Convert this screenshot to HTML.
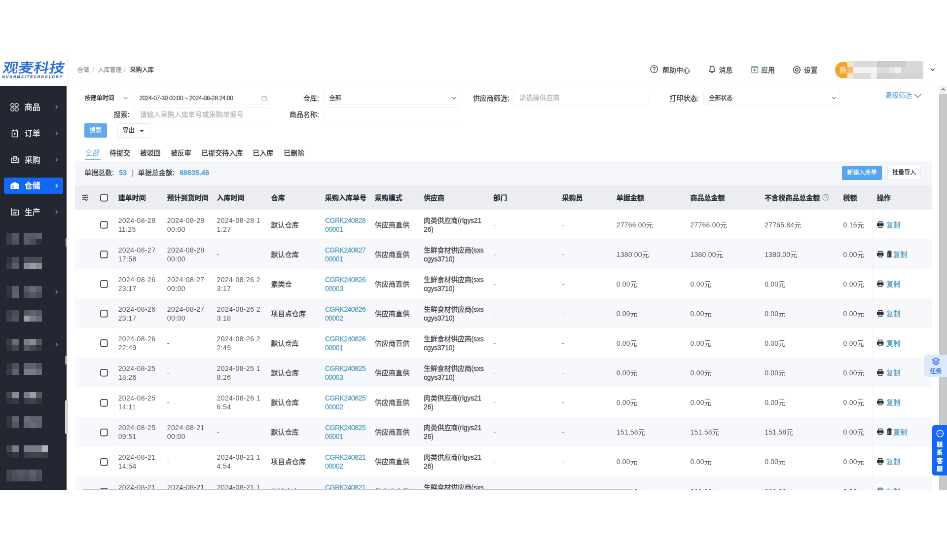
<!DOCTYPE html>
<html lang="zh-CN"><head><meta charset="utf-8"><title>采购入库</title><style>
*{box-sizing:border-box;margin:0;padding:0}
html,body{width:947px;height:547px;overflow:hidden;background:#fff}
body{font-family:"Liberation Sans","Noto Sans CJK SC",sans-serif;color:#44474e;-webkit-text-stroke:0.3px}
#app{position:absolute;left:0;top:0;width:1920px;height:1109px;transform:scale(0.493229);transform-origin:0 0;overflow:hidden;background:#fff;font-size:14px;will-change:transform;opacity:0.9999;filter:blur(0.55px)}
.abs{position:absolute;white-space:nowrap}
.t{position:absolute;white-space:nowrap;line-height:20px;height:20px;margin-top:-10px}
.t12{font-size:12px}
.t14{font-size:14px}
.t16{font-size:16px}
.hd{color:#2c3038;font-weight:bold}
.lnk{color:#559ebd}
.lab{color:#3a3e46;text-align:right}
.ph{color:#b4b8c0}
.inp{position:absolute;border:1px solid #eef0f4;border-radius:3px;background:#fff}
.row{position:absolute;left:151.65px;width:1737.93px;height:60.13px}
.row.odd{background:#fff}
.row.even{background:#f7f8fb}
.c{position:absolute;white-space:nowrap;line-height:17.8px;font-size:14px;top:50%;transform:translateY(-50%);margin-top:1.9px;letter-spacing:0.15px}
.n{color:#575a61;-webkit-text-stroke:0;letter-spacing:0.42px}
.cb{position:absolute;width:15.5px;height:15.5px;border:1.6px solid #3c4048;border-radius:3.5px;background:#fff}
.side{position:absolute;left:0;background:#242731}
.sit{position:absolute;color:#f2f3f5;font-size:16px;line-height:22px;height:22px;margin-top:-11px;white-space:nowrap}
svg{position:absolute;overflow:visible}
</style></head><body><div id="app">
<div class="abs" style="left:0;top:111.51px;width:1920px;height:61.43px;background:#fff;border-bottom:1px solid #eceef2"></div>
<div class="abs" style="left:135.84px;top:111.51px;width:1px;height:61.43px;background:#f0f1f4"></div>
<div class="abs" id="logo" style="left:5.88px;top:123.47px;font-size:27px;line-height:30px;font-weight:500;color:#2b6dd4;transform-origin:0 50%;transform:scaleX(1.16) skewX(-9deg);letter-spacing:0px">观麦科技</div>
<div class="abs" id="logosub" style="left:4.46px;top:152.36px;font-size:6.8px;line-height:8px;font-weight:bold;font-style:italic;color:#3560b4;letter-spacing:2.56px">GUANMAITECHNOLOGY</div>
<div class="t t12" style="left:156.52px;top:142.33px;color:#8c9098">仓储</div>
<div class="t t12" style="left:186.93px;top:142.33px;color:#c0c4cc">/</div>
<div class="t t12" style="left:198.69px;top:142.33px;color:#8c9098">入库管理</div>
<div class="t t12" style="left:251.20px;top:142.33px;color:#c0c4cc">/</div>
<div class="t t12" style="left:263.77px;top:142.33px;color:#2c3038">采购入库</div>
<div class="t t14" style="left:1342.99px;top:141.72px;color:#3a3e46">帮助中心</div>
<div class="t t14" style="left:1457.54px;top:141.72px;color:#3a3e46">消息</div>
<div class="t t14" style="left:1543.10px;top:141.72px;color:#3a3e46">应用</div>
<div class="t t14" style="left:1629.87px;top:141.72px;color:#3a3e46">设置</div>
<svg style="left:1318.05px;top:131.99px" width="16.42px" height="16.42px" viewBox="0 0 16 16"><circle cx="8" cy="8" r="7.2" fill="none" stroke="#3a3e46" stroke-width="1.3"/><path d="M5.8 6.3a2.2 2.2 0 1 1 3.2 2c-.7.4-1 .8-1 1.6" fill="none" stroke="#3a3e46" stroke-width="1.3" stroke-linecap="round"/><circle cx="8" cy="11.9" r=".85" fill="#3a3e46"/></svg>
<svg style="left:1437.06px;top:132.19px" width="13.38px" height="17.03px" viewBox="0 0 14 17"><path d="M7 1.400C4.200 1.400 2.700 3.500 2.700 6.300V10.200L1.300 12.900H12.700L11.300 10.200V6.300C11.300 3.500 9.800 1.400 7 1.400Z" fill="none" stroke="#2e323a" stroke-width="1.700" stroke-linejoin="round"/><path d="M5.200 15.300H8.800" stroke="#2e323a" stroke-width="1.700" stroke-linecap="round"/></svg>
<svg style="left:1522.62px;top:133.20px" width="14.19px" height="15.41px" viewBox="0 0 14 15"><rect x="0.8" y="1.6" width="12.4" height="12.6" rx="1.6" fill="#fff" stroke="#5aa99c" stroke-width="1.5"/><path d="M0.8 3.4h12.400" stroke="#5aa99c" stroke-width="1.500"/><path d="M7 5.8v4.600M4.800 8.500L7 10.700l2.200-2.200" fill="none" stroke="#e2504c" stroke-width="1.400" stroke-linecap="round" stroke-linejoin="round"/></svg>
<svg style="left:1607.16px;top:133.00px" width="17.03px" height="17.03px" viewBox="0 0 16 16"><path d="M6.87 1.62Q8.00 0.70 9.13 1.62Q10.26 2.55 11.71 2.69Q13.16 2.84 13.31 4.29Q13.45 5.74 14.38 6.87Q15.30 8.00 14.38 9.13Q13.45 10.26 13.31 11.71Q13.16 13.16 11.71 13.31Q10.26 13.45 9.13 14.38Q8.00 15.30 6.87 14.38Q5.74 13.45 4.29 13.31Q2.84 13.16 2.69 11.71Q2.55 10.26 1.62 9.13Q0.70 8.00 1.62 6.87Q2.55 5.74 2.69 4.29Q2.84 2.84 4.29 2.69Q5.74 2.55 6.87 1.62Z" fill="none" stroke="#2e323a" stroke-width="1.400" stroke-linejoin="round"/><circle cx="8" cy="8" r="2.600" fill="none" stroke="#2e323a" stroke-width="1.400"/></svg>
<div class="abs" style="left:1692.93px;top:125.30px;width:34.06px;height:34.06px;border-radius:50%;background:#f0a32e;color:#fff;font-size:14px;line-height:34.06px;text-align:center;overflow:hidden"><span style="position:relative;left:-1px;opacity:.75">扬</span></div>
<div class="abs" style="left:1718.07px;top:124.28px;width:12.06px;height:11.86px;background:#f6e3c4"></div>
<div class="abs" style="left:1730.03px;top:124.28px;width:48.15px;height:11.86px;background:#dadadb"></div>
<div class="abs" style="left:1778.08px;top:124.28px;width:58.90px;height:11.86px;background:#cbcbcc"></div>
<div class="abs" style="left:1836.87px;top:124.28px;width:35.58px;height:11.86px;background:#d9d9da"></div>
<div class="abs" style="left:1718.07px;top:136.04px;width:12.06px;height:11.86px;background:#f4bb62"></div>
<div class="abs" style="left:1730.03px;top:136.04px;width:48.15px;height:11.86px;background:#f3f3f4"></div>
<div class="abs" style="left:1778.08px;top:136.04px;width:24.43px;height:11.86px;background:#dcdcdd"></div>
<div class="abs" style="left:1802.41px;top:136.04px;width:12.27px;height:11.86px;background:#e6e6e7"></div>
<div class="abs" style="left:1814.57px;top:136.04px;width:12.27px;height:11.86px;background:#f1f1f2"></div>
<div class="abs" style="left:1826.74px;top:136.04px;width:45.72px;height:11.86px;background:#d8d8d9"></div>
<div class="abs" style="left:1718.07px;top:147.80px;width:12.06px;height:11.86px;background:#f7e6cb"></div>
<div class="abs" style="left:1730.03px;top:147.80px;width:34.97px;height:11.86px;background:#dcdcdd"></div>
<div class="abs" style="left:1764.90px;top:147.80px;width:13.28px;height:11.86px;background:#f0f0f1"></div>
<div class="abs" style="left:1778.08px;top:147.80px;width:36.60px;height:11.86px;background:#d0d0d1"></div>
<div class="abs" style="left:1814.57px;top:147.80px;width:57.88px;height:11.86px;background:#d5d5d6"></div>
<svg style="left:1885.94px;top:138.27px" width="9.73px" height="5.88px" viewBox="0 0 10 6"><path d="M1 1l4 4 4-4" fill="none" stroke="#3a3e46" stroke-width="1.500"/></svg>
<div class="side" style="top:173.55px;width:135.23px;height:820.71px"></div>
<div class="abs" style="left:8.11px;top:359.87px;width:119.62px;height:33.45px;background:#1268f3;border-radius:4px"></div>
<div class="sit" style="left:49.67px;top:218.26px;">商品</div>
<svg style="left:111.51px;top:212.48px" width="5.47px" height="9.73px" viewBox="0 0 6 10"><path d="M1 1l4 4-4 4" fill="none" stroke="#8a8e9a" stroke-width="1.700"/></svg>
<div class="sit" style="left:49.67px;top:271.37px;">订单</div>
<svg style="left:111.51px;top:265.60px" width="5.47px" height="9.73px" viewBox="0 0 6 10"><path d="M1 1l4 4-4 4" fill="none" stroke="#8a8e9a" stroke-width="1.700"/></svg>
<div class="sit" style="left:49.67px;top:324.70px;">采购</div>
<svg style="left:111.51px;top:318.92px" width="5.47px" height="9.73px" viewBox="0 0 6 10"><path d="M1 1l4 4-4 4" fill="none" stroke="#8a8e9a" stroke-width="1.700"/></svg>
<div class="sit" style="left:49.67px;top:377.41px;font-weight:bold;">仓储</div>
<svg style="left:111.51px;top:371.63px" width="5.47px" height="9.73px" viewBox="0 0 6 10"><path d="M1 1l4 4-4 4" fill="none" stroke="#ffffff" stroke-width="1.700"/></svg>
<div class="sit" style="left:49.67px;top:430.73px;">生产</div>
<svg style="left:111.51px;top:424.95px" width="5.47px" height="9.73px" viewBox="0 0 6 10"><path d="M1 1l4 4-4 4" fill="none" stroke="#8a8e9a" stroke-width="1.700"/></svg>
<svg style="left:21.49px;top:208.83px" width="17.03px" height="17.03px" viewBox="0 0 17 17"><g fill="none" stroke="#eceef2" stroke-width="1.500"><rect x="1" y="1" width="6.600" height="6.600" rx="3"/><rect x="9.400" y="1" width="6.600" height="6.600" rx="3"/><rect x="1" y="9.400" width="6.600" height="6.600" rx="3"/><rect x="9.400" y="9.400" width="6.600" height="6.600" rx="3"/></g></svg>
<svg style="left:23.11px;top:261.54px" width="13.99px" height="17.03px" viewBox="0 0 14 17"><g fill="none" stroke="#eceef2" stroke-width="1.600" stroke-linejoin="round"><path d="M1.500 3h11v12.500h-11z"/><path d="M4 1v3M10 1v3" stroke-linecap="round"/></g><path d="M5.400 6.600l4.200 2.700-4.200 2.700z" fill="#eceef2"/></svg>
<svg style="left:21.80px;top:317.09px" width="16.32px" height="13.18px" viewBox="0 0 16 13"><g fill="none" stroke="#eceef2" stroke-width="1.600" stroke-linejoin="round"><path d="M1 3.600h14v8.600h-14z"/><path d="M4.800 3.600V0.900h6.400V3.600" /><path d="M4.800 5.600c0 2.400 1.400 3.400 3.200 3.400s3.200-1 3.200-3.400" stroke-linecap="round"/></g></svg>
<svg style="left:21.09px;top:369.00px" width="18.04px" height="14.19px" viewBox="0 0 18 14"><path d="M9 0.200C12 1.200 15.500 2.900 17.500 4.600V13.800H0.500V4.600C2.500 2.900 6 1.200 9 0.200z" fill="#fff"/><rect x="3.400" y="7.200" width="3.400" height="1.500" fill="#1268f3"/><rect x="3.400" y="10.200" width="3.400" height="1.500" fill="#1268f3"/></svg>
<svg style="left:21.80px;top:421.91px" width="16.32px" height="15.00px" viewBox="0 0 16 15"><g fill="none" stroke="#eceef2" stroke-width="1.600" stroke-linejoin="round"><path d="M1 4h14v10h-14z"/><path d="M1 0.800v3.200M8 1.500v2.500" stroke-linecap="round"/><path d="M4.300 8.500h7.400M6 8.500v5.500M10 8.500v5.500"/></g></svg>
<div class="abs" style="left:13.18px;top:471.79px;width:12.27px;height:12.16px;background:#3a3d47"></div>
<div class="abs" style="left:25.34px;top:471.79px;width:12.27px;height:12.16px;background:#555862"></div>
<div class="abs" style="left:48.25px;top:471.79px;width:12.27px;height:12.16px;background:#5a5d68"></div>
<div class="abs" style="left:60.42px;top:471.79px;width:12.27px;height:12.16px;background:#5a5d68"></div>
<div class="abs" style="left:72.58px;top:471.79px;width:12.27px;height:12.16px;background:#5e616b"></div>
<div class="abs" style="left:13.18px;top:483.85px;width:12.27px;height:12.16px;background:#3d404a"></div>
<div class="abs" style="left:25.34px;top:483.85px;width:12.27px;height:12.16px;background:#50535d"></div>
<div class="abs" style="left:48.25px;top:483.85px;width:12.27px;height:12.16px;background:#5a5d68"></div>
<div class="abs" style="left:60.42px;top:483.85px;width:12.27px;height:12.16px;background:#4a4d57"></div>
<div class="abs" style="left:72.58px;top:483.85px;width:12.27px;height:12.16px;background:#2f323c"></div>
<div class="abs" style="left:13.18px;top:520.85px;width:12.27px;height:12.16px;background:#30333d"></div>
<div class="abs" style="left:25.34px;top:520.85px;width:12.27px;height:12.16px;background:#4a4d57"></div>
<div class="abs" style="left:48.25px;top:520.85px;width:12.27px;height:12.16px;background:#4a4d57"></div>
<div class="abs" style="left:60.42px;top:520.85px;width:12.27px;height:12.16px;background:#4a4d57"></div>
<div class="abs" style="left:72.58px;top:520.85px;width:12.27px;height:12.16px;background:#4a4d57"></div>
<div class="abs" style="left:13.18px;top:532.92px;width:12.27px;height:12.16px;background:#3a3d47"></div>
<div class="abs" style="left:25.34px;top:532.92px;width:12.27px;height:12.16px;background:#5a5d68"></div>
<div class="abs" style="left:48.25px;top:532.92px;width:12.27px;height:12.16px;background:#8a8d97"></div>
<div class="abs" style="left:60.42px;top:532.92px;width:12.27px;height:12.16px;background:#9a9da6"></div>
<div class="abs" style="left:72.58px;top:532.92px;width:12.27px;height:12.16px;background:#8a8d97"></div>
<div class="abs" style="left:13.18px;top:579.85px;width:12.27px;height:12.16px;background:#33363f"></div>
<div class="abs" style="left:25.34px;top:579.85px;width:12.27px;height:12.16px;background:#5a5d68"></div>
<div class="abs" style="left:48.25px;top:579.85px;width:12.27px;height:12.16px;background:#555862"></div>
<div class="abs" style="left:60.42px;top:579.85px;width:12.27px;height:12.16px;background:#6a6d77"></div>
<div class="abs" style="left:72.58px;top:579.85px;width:12.27px;height:12.16px;background:#5a5d68"></div>
<div class="abs" style="left:13.18px;top:591.92px;width:12.27px;height:12.16px;background:#30333d"></div>
<div class="abs" style="left:25.34px;top:591.92px;width:12.27px;height:12.16px;background:#60636d"></div>
<div class="abs" style="left:48.25px;top:591.92px;width:12.27px;height:12.16px;background:#4a4d57"></div>
<div class="abs" style="left:60.42px;top:591.92px;width:12.27px;height:12.16px;background:#555862"></div>
<div class="abs" style="left:72.58px;top:591.92px;width:12.27px;height:12.16px;background:#4a4d57"></div>
<svg style="left:111.51px;top:586.95px" width="5.47px" height="9.73px" viewBox="0 0 6 10"><path d="M1 1l4 4-4 4" fill="none" stroke="#8a8e9a" stroke-width="1.700"/></svg>
<div class="abs" style="left:13.18px;top:627.70px;width:12.27px;height:12.16px;background:#3a3d47"></div>
<div class="abs" style="left:25.34px;top:627.70px;width:12.27px;height:12.16px;background:#4a4d57"></div>
<div class="abs" style="left:48.25px;top:627.70px;width:12.27px;height:12.16px;background:#555862"></div>
<div class="abs" style="left:60.42px;top:627.70px;width:12.27px;height:12.16px;background:#60636d"></div>
<div class="abs" style="left:72.58px;top:627.70px;width:12.27px;height:12.16px;background:#555862"></div>
<div class="abs" style="left:13.18px;top:639.76px;width:12.27px;height:12.16px;background:#40434d"></div>
<div class="abs" style="left:25.34px;top:639.76px;width:12.27px;height:12.16px;background:#50535d"></div>
<div class="abs" style="left:48.25px;top:639.76px;width:12.27px;height:12.16px;background:#9a9da6"></div>
<div class="abs" style="left:60.42px;top:639.76px;width:12.27px;height:12.16px;background:#7a7d87"></div>
<div class="abs" style="left:72.58px;top:639.76px;width:12.27px;height:12.16px;background:#6a6d77"></div>
<div class="abs" style="left:13.18px;top:686.50px;width:12.27px;height:12.16px;background:#3a3d47"></div>
<div class="abs" style="left:25.34px;top:686.50px;width:12.27px;height:12.16px;background:#6a6d77"></div>
<div class="abs" style="left:48.25px;top:686.50px;width:12.27px;height:12.16px;background:#7a7d87"></div>
<div class="abs" style="left:60.42px;top:686.50px;width:12.27px;height:12.16px;background:#8a8d97"></div>
<div class="abs" style="left:72.58px;top:686.50px;width:12.27px;height:12.16px;background:#555862"></div>
<div class="abs" style="left:13.18px;top:698.56px;width:12.27px;height:12.16px;background:#30333d"></div>
<div class="abs" style="left:25.34px;top:698.56px;width:12.27px;height:12.16px;background:#44474f"></div>
<div class="abs" style="left:48.25px;top:698.56px;width:12.27px;height:12.16px;background:#555862"></div>
<div class="abs" style="left:60.42px;top:698.56px;width:12.27px;height:12.16px;background:#44474f"></div>
<div class="abs" style="left:72.58px;top:698.56px;width:12.27px;height:12.16px;background:#33363f"></div>
<svg style="left:111.51px;top:693.59px" width="5.47px" height="9.73px" viewBox="0 0 6 10"><path d="M1 1l4 4-4 4" fill="none" stroke="#8a8e9a" stroke-width="1.700"/></svg>
<div class="abs" style="left:13.18px;top:735.97px;width:12.27px;height:12.16px;background:#33363f"></div>
<div class="abs" style="left:25.34px;top:735.97px;width:12.27px;height:12.16px;background:#50535d"></div>
<div class="abs" style="left:48.25px;top:735.97px;width:12.27px;height:12.16px;background:#60636d"></div>
<div class="abs" style="left:60.42px;top:735.97px;width:12.27px;height:12.16px;background:#60636d"></div>
<div class="abs" style="left:72.58px;top:735.97px;width:12.27px;height:12.16px;background:#50535d"></div>
<div class="abs" style="left:13.18px;top:748.03px;width:12.27px;height:12.16px;background:#3a3d47"></div>
<div class="abs" style="left:25.34px;top:748.03px;width:12.27px;height:12.16px;background:#60636d"></div>
<div class="abs" style="left:48.25px;top:748.03px;width:12.27px;height:12.16px;background:#7a7d87"></div>
<div class="abs" style="left:60.42px;top:748.03px;width:12.27px;height:12.16px;background:#7a7d87"></div>
<div class="abs" style="left:72.58px;top:748.03px;width:12.27px;height:12.16px;background:#6a6d77"></div>
<div class="abs" style="left:13.18px;top:794.76px;width:12.27px;height:12.16px;background:#44474f"></div>
<div class="abs" style="left:25.34px;top:794.76px;width:12.27px;height:12.16px;background:#8a8d97"></div>
<div class="abs" style="left:48.25px;top:794.76px;width:12.27px;height:12.16px;background:#7a7d87"></div>
<div class="abs" style="left:60.42px;top:794.76px;width:12.27px;height:12.16px;background:#9a9da6"></div>
<div class="abs" style="left:72.58px;top:794.76px;width:12.27px;height:12.16px;background:#555862"></div>
<div class="abs" style="left:13.18px;top:806.83px;width:12.27px;height:12.16px;background:#30333d"></div>
<div class="abs" style="left:25.34px;top:806.83px;width:12.27px;height:12.16px;background:#3a3d47"></div>
<div class="abs" style="left:48.25px;top:806.83px;width:12.27px;height:12.16px;background:#3a3d47"></div>
<div class="abs" style="left:60.42px;top:806.83px;width:12.27px;height:12.16px;background:#40434d"></div>
<div class="abs" style="left:72.58px;top:806.83px;width:12.27px;height:12.16px;background:#33363f"></div>
<div class="abs" style="left:13.18px;top:843.83px;width:12.27px;height:12.16px;background:#33363f"></div>
<div class="abs" style="left:25.34px;top:843.83px;width:12.27px;height:12.16px;background:#60636d"></div>
<div class="abs" style="left:48.25px;top:843.83px;width:12.27px;height:12.16px;background:#6a6d77"></div>
<div class="abs" style="left:60.42px;top:843.83px;width:12.27px;height:12.16px;background:#60636d"></div>
<div class="abs" style="left:72.58px;top:843.83px;width:12.27px;height:12.16px;background:#60636d"></div>
<div class="abs" style="left:13.18px;top:855.89px;width:12.27px;height:12.16px;background:#33363f"></div>
<div class="abs" style="left:25.34px;top:855.89px;width:12.27px;height:12.16px;background:#555862"></div>
<div class="abs" style="left:48.25px;top:855.89px;width:12.27px;height:12.16px;background:#60636d"></div>
<div class="abs" style="left:60.42px;top:855.89px;width:12.27px;height:12.16px;background:#6a6d77"></div>
<div class="abs" style="left:72.58px;top:855.89px;width:12.27px;height:12.16px;background:#60636d"></div>
<div class="abs" style="left:13.18px;top:903.43px;width:12.27px;height:12.16px;background:#44474f"></div>
<div class="abs" style="left:25.34px;top:903.43px;width:12.27px;height:12.16px;background:#7a7d87"></div>
<div class="abs" style="left:48.25px;top:903.43px;width:12.27px;height:12.16px;background:#7a7d87"></div>
<div class="abs" style="left:60.42px;top:903.43px;width:12.27px;height:12.16px;background:#7a7d87"></div>
<div class="abs" style="left:72.58px;top:903.43px;width:12.27px;height:12.16px;background:#7a7d87"></div>
<div class="abs" style="left:84.75px;top:903.43px;width:12.27px;height:12.16px;background:#b0b3bb"></div>
<div class="abs" style="left:13.18px;top:915.50px;width:12.27px;height:12.16px;background:#2a2d37"></div>
<div class="abs" style="left:25.34px;top:915.50px;width:12.27px;height:12.16px;background:#33363f"></div>
<div class="abs" style="left:48.25px;top:915.50px;width:12.27px;height:12.16px;background:#3a3d47"></div>
<div class="abs" style="left:60.42px;top:915.50px;width:12.27px;height:12.16px;background:#40434d"></div>
<div class="abs" style="left:72.58px;top:915.50px;width:12.27px;height:12.16px;background:#40434d"></div>
<div class="abs" style="left:84.75px;top:915.50px;width:12.27px;height:12.16px;background:#3a3d47"></div>
<div class="abs" style="left:13.18px;top:951.69px;width:12.27px;height:12.16px;background:#44474f"></div>
<div class="abs" style="left:25.34px;top:951.69px;width:12.27px;height:12.16px;background:#50535d"></div>
<div class="abs" style="left:37.31px;top:951.69px;width:12.27px;height:12.16px;background:#555862"></div>
<div class="abs" style="left:48.25px;top:951.69px;width:12.27px;height:12.16px;background:#50535d"></div>
<div class="abs" style="left:60.42px;top:951.69px;width:12.27px;height:12.16px;background:#60636d"></div>
<div class="abs" style="left:72.58px;top:951.69px;width:12.27px;height:12.16px;background:#50535d"></div>
<div class="abs" style="left:13.18px;top:963.75px;width:12.27px;height:12.16px;background:#40434d"></div>
<div class="abs" style="left:25.34px;top:963.75px;width:12.27px;height:12.16px;background:#4a4d57"></div>
<div class="abs" style="left:37.31px;top:963.75px;width:12.27px;height:12.16px;background:#4d505a"></div>
<div class="abs" style="left:48.25px;top:963.75px;width:12.27px;height:12.16px;background:#4a4d57"></div>
<div class="abs" style="left:60.42px;top:963.75px;width:12.27px;height:12.16px;background:#555862"></div>
<div class="abs" style="left:72.58px;top:963.75px;width:12.27px;height:12.16px;background:#4a4d57"></div>
<div class="abs" style="left:133.00px;top:482.53px;width:3.24px;height:17.23px;background:#c9cbd1;border-radius:2px;opacity:.8"></div>
<div class="abs" style="left:132.39px;top:720.76px;width:3.85px;height:18.25px;background:#c9cbd1;border-radius:2px;opacity:.8"></div>
<div class="abs" style="left:131.78px;top:810.98px;width:6.49px;height:68.93px;background:#d4d5da;border-radius:3px"></div>
<div class="inp" style="left:271.07px;top:183.89px;width:276.95px;height:29.60px"></div>
<div class="inp" style="left:655.88px;top:183.89px;width:275.33px;height:29.60px"></div>
<div class="inp" style="left:1040.90px;top:183.89px;width:275.53px;height:29.60px"></div>
<div class="inp" style="left:1425.91px;top:183.89px;width:276.34px;height:29.60px"></div>
<div class="inp" style="left:271.07px;top:216.73px;width:276.95px;height:29.60px"></div>
<div class="inp" style="left:655.88px;top:216.73px;width:275.33px;height:29.60px"></div>
<div class="t t12" id="lab1" style="left:171.73px;top:198.69px;color:#2c3038">按建单时间</div>
<svg style="left:250.39px;top:195.89px" width="9.33px" height="5.60px" viewBox="0 0 10 6"><path d="M1 1l4 4 4-4" fill="none" stroke="#6a6e78" stroke-width="1.3"/></svg>
<div class="t t12" id="date" style="left:282.42px;top:198.69px;color:#4a4e56;letter-spacing:-0.37px">2024-07-30 00:00 ~ 2024-08-28 24:00</div>
<svg style="left:529.57px;top:193.82px" width="11.35px" height="10.54px" viewBox="0 0 12 11"><g fill="none" stroke="#b4b8c0" stroke-width="1.100"><rect x="0.800" y="1.800" width="10.400" height="8.400" rx="1"/><path d="M0.800 4.500h10.400M3.500 0.500v2.500M8.500 0.500v2.500"/></g></svg>
<div class="t t14 lab" style="left:140.71px;top:231.54px;width:121.65px">搜索:</div>
<div class="t t14 lab" style="left:525.11px;top:198.69px;width:121.65px">仓库:</div>
<div class="t t14 lab" style="left:525.11px;top:231.54px;width:121.65px">商品名称:</div>
<div class="t t14 lab" style="left:911.14px;top:198.69px;width:121.65px">供应商筛选:</div>
<div class="t t14 lab" style="left:1295.54px;top:198.69px;width:121.65px">打印状态:</div>
<div class="t t14 ph" id="ph1" style="left:283.84px;top:231.54px;">请输入采购入库单号或采购单据号</div>
<div class="t t12" style="left:667.44px;top:198.69px;color:#3a3e46">全部</div>
<svg style="left:916.41px;top:195.89px" width="9.33px" height="5.60px" viewBox="0 0 10 6"><path d="M1 1l4 4 4-4" fill="none" stroke="#6a6e78" stroke-width="1.3"/></svg>
<div class="t t14 ph" style="left:1053.06px;top:198.69px;font-size:13.6px">请选择供应商</div>
<div class="t t12" style="left:1437.47px;top:198.69px;color:#3a3e46">全部状态</div>
<svg style="left:1685.83px;top:195.89px" width="9.33px" height="5.60px" viewBox="0 0 10 6"><path d="M1 1l4 4 4-4" fill="none" stroke="#6a6e78" stroke-width="1.3"/></svg>
<div class="t t14" id="adv" style="left:1795.31px;top:193.62px;color:#5ba4da;font-size:13.4px;-webkit-text-stroke:0">高级筛选</div>
<svg style="left:1851.67px;top:189.00px" width="17.44px" height="10.46px" viewBox="0 0 10 6"><path d="M1 1l4 4 4-4" fill="none" stroke="#5ba4da" stroke-width="1.1"/></svg>
<div class="abs" style="left:170.71px;top:250.39px;width:46.23px;height:28.38px;background:#5fa9ec;border-radius:3px;color:rgba(255,255,255,.82);font-size:12px;text-align:center;line-height:28.38px">搜索</div>
<div class="abs" style="left:237.82px;top:250.39px;width:67.51px;height:28.38px;background:#fff;border:1px solid #e6e8ee;border-radius:3px"></div>
<div class="t t12" style="left:248.77px;top:264.58px;color:#2c3038">导出</div>
<svg style="left:283.03px;top:262.56px" width="9.33px" height="5.27px" viewBox="0 0 10 6"><path d="M0.500 0.500h9l-4.500 5z" fill="#22252c"/></svg>
<div class="t t14" style="left:172.94px;top:310.20px;color:#62abdf;font-size:14.6px;-webkit-text-stroke:0">全部</div>
<div class="abs" style="left:172.33px;top:322.37px;width:31.63px;height:2px;background:#7ab6e4"></div>
<div class="t t14" id="tab_待提交" style="left:222.01px;top:310.20px;color:#2c3038">待提交</div>
<div class="t t14" id="tab_被驳回" style="left:283.84px;top:310.20px;color:#2c3038">被驳回</div>
<div class="t t14" id="tab_被反审" style="left:345.88px;top:310.20px;color:#2c3038">被反审</div>
<div class="t t14" id="tab_已提交待入库" style="left:408.33px;top:310.20px;color:#2c3038">已提交待入库</div>
<div class="t t14" id="tab_已入库" style="left:512.34px;top:310.20px;color:#2c3038">已入库</div>
<div class="t t14" id="tab_已删除" style="left:574.99px;top:310.20px;color:#2c3038">已删除</div>
<div class="abs" style="left:151.65px;top:327.03px;width:1737.93px;height:49.06px;background:#f5f6fa"></div>
<div class="t t14" style="left:171.32px;top:350.34px;color:#3a3e46">单据总数:</div>
<div class="t t14" style="left:241.27px;top:350.34px;color:#5ba4da;font-weight:bold">53</div>
<div class="t t14" style="left:267.62px;top:350.34px;color:#6a6e78">|</div>
<div class="t t14" style="left:279.79px;top:350.34px;color:#3a3e46">单据总金额:</div>
<div class="t t14" id="amt" style="left:364.13px;top:350.34px;color:#5ba4da;font-weight:bold;letter-spacing:0.2px">68635.46</div>
<div class="abs" style="left:1707.12px;top:335.95px;width:81.10px;height:29.20px;background:#58a4ec;border-radius:3px;color:rgba(255,255,255,.9);font-size:12px;text-align:center;line-height:29.20px">新建入库单</div>
<div class="abs" style="left:1798.96px;top:335.95px;width:68.53px;height:29.20px;background:#fff;border:1px solid #e6e8ee;border-radius:3px;color:#2c3038;font-size:12px;text-align:center;line-height:27.17px">批量导入</div>
<div class="abs" style="left:151.65px;top:375.69px;width:1737.93px;height:49.27px;background:#ebedf2"></div>
<div class="t t14 hd" id="h_建单时间" style="left:239.65px;top:400.73px;">建单时间</div>
<div class="t t14 hd" id="h_预计到货时间" style="left:338.79px;top:400.73px;">预计到货时间</div>
<div class="t t14 hd" id="h_入库时间" style="left:439.55px;top:400.73px;">入库时间</div>
<div class="t t14 hd" id="h_仓库" style="left:549.44px;top:400.73px;">仓库</div>
<div class="t t14 hd" id="h_采购入库单号" style="left:658.92px;top:400.73px;">采购入库单号</div>
<div class="t t14 hd" id="h_采购模式" style="left:759.69px;top:400.73px;">采购模式</div>
<div class="t t14 hd" id="h_供应商" style="left:859.03px;top:400.73px;">供应商</div>
<div class="t t14 hd" id="h_部门" style="left:1000.35px;top:400.73px;">部门</div>
<div class="t t14 hd" id="h_采购员" style="left:1139.43px;top:400.73px;">采购员</div>
<div class="t t14 hd" id="h_单据金额" style="left:1249.72px;top:400.73px;">单据金额</div>
<div class="t t14 hd" id="h_商品总金额" style="left:1399.55px;top:400.73px;">商品总金额</div>
<div class="t t14 hd" id="h_不含税商品总金额" style="left:1550.19px;top:400.73px;">不含税商品总金额</div>
<div class="t t14 hd" id="h_税额" style="left:1709.55px;top:400.73px;">税额</div>
<div class="t t14 hd" id="h_操作" style="left:1777.88px;top:400.73px;">操作</div>
<svg style="left:1666.57px;top:393.43px" width="14.19px" height="14.19px" viewBox="0 0 16 16"><circle cx="8" cy="8" r="7" fill="none" stroke="#8c9098" stroke-width="1.200"/><path d="M5.900 6.400a2.100 2.100 0 1 1 3.100 1.900c-.7.400-1 .8-1 1.500" fill="none" stroke="#8c9098" stroke-width="1.200" stroke-linecap="round"/><circle cx="8" cy="11.800" r=".800" fill="#8c9098"/></svg>
<svg style="left:166.25px;top:394.04px" width="13.38px" height="13.38px" viewBox="0 0 14 14"><g stroke="#3a3e46" stroke-width="1.400" fill="none"><path d="M1 2.500h12M1 7h12M1 11.500h12"/></g><g fill="#fff" stroke="#3a3e46" stroke-width="1.200"><circle cx="9.500" cy="2.500" r="1.600"/><circle cx="4.500" cy="7" r="1.600"/><circle cx="9.500" cy="11.500" r="1.600"/></g></svg>
<svg style="left:203.35px;top:393.12px" width="15.6" height="15.6" viewBox="0 0 15.6 15.6"><rect x="0.9" y="0.9" width="13.8" height="13.8" rx="3" fill="#fff" stroke="#3c4048" stroke-width="1.700"/></svg>
<div class="row odd" style="top:424.95px">
<svg style="left:51.70px;top:50%;margin-top:-6.900px" width="15.6" height="15.6" viewBox="0 0 15.6 15.6"><rect x="0.9" y="0.9" width="13.8" height="13.8" rx="3" fill="#fff" stroke="#3c4048" stroke-width="1.700"/></svg>
<div class="c n" style="left:87.99px">2024-08-28<br>11:25</div>
<div class="c n" style="left:187.13px">2024-08-28<br>00:00</div>
<div class="c n" style="left:287.90px">2024-08-28 1<br>1:27</div>
<div class="c" style="left:397.79px">默认仓库</div>
<div class="c lnk" style="left:507.27px;letter-spacing:-0.48px">CGRK240828<br>00001</div>
<div class="c" style="left:608.03px">供应商直供</div>
<div class="c" style="left:707.38px;letter-spacing:-0.2px">肉类供应商(rlgys21<br>26)</div>
<div class="c n" style="left:848.69px;color:#7c7f87">-</div>
<div class="c n" style="left:987.78px;color:#7c7f87">-</div>
<div class="c n" style="left:1098.07px;letter-spacing:0.22px">27766.00元</div>
<div class="c n" style="left:1247.90px;letter-spacing:0.22px">27766.00元</div>
<div class="c n" style="left:1398.54px;letter-spacing:0.22px">27765.84元</div>
<div class="c n" style="left:1557.90px;letter-spacing:0.22px">0.16元</div>
<svg style="left:1626.02px;top:50%;margin-top:-7.2px" width="14" height="14.400" viewBox="0 0 14 14"><path d="M3.600 4V1.300h6.800V4" fill="none" stroke="#2a2d35" stroke-width="1.700"/><path d="M0.600 4.300h12.800v6.200h-2.600V8.200H3.200v2.300H0.600z" fill="#2a2d35"/><rect x="3.900" y="9" width="6.200" height="3.900" fill="#fff" stroke="#2a2d35" stroke-width="1.500"/></svg>
<div class="c lnk" style="left:1645.48px">复制</div>
</div>
<div class="row even" style="top:485.03px">
<svg style="left:51.70px;top:50%;margin-top:-6.900px" width="15.6" height="15.6" viewBox="0 0 15.6 15.6"><rect x="0.9" y="0.9" width="13.8" height="13.8" rx="3" fill="#fff" stroke="#3c4048" stroke-width="1.700"/></svg>
<div class="c n" style="left:87.99px">2024-08-27<br>17:58</div>
<div class="c n" style="left:187.13px">2024-08-28<br>00:00</div>
<div class="c n" style="left:287.90px">-</div>
<div class="c" style="left:397.79px">默认仓库</div>
<div class="c lnk" style="left:507.27px;letter-spacing:-0.48px">CGRK240827<br>00001</div>
<div class="c" style="left:608.03px">供应商直供</div>
<div class="c" style="left:707.38px;letter-spacing:-0.2px">生鲜食材供应商(sxs<br>cgys3710)</div>
<div class="c n" style="left:848.69px;color:#7c7f87">-</div>
<div class="c n" style="left:987.78px;color:#7c7f87">-</div>
<div class="c n" style="left:1098.07px;letter-spacing:0.22px">1380.00元</div>
<div class="c n" style="left:1247.90px;letter-spacing:0.22px">1380.00元</div>
<div class="c n" style="left:1398.54px;letter-spacing:0.22px">1380.00元</div>
<div class="c n" style="left:1557.90px;letter-spacing:0.22px">0.00元</div>
<svg style="left:1626.02px;top:50%;margin-top:-7.2px" width="14" height="14.400" viewBox="0 0 14 14"><path d="M3.600 4V1.300h6.800V4" fill="none" stroke="#2a2d35" stroke-width="1.700"/><path d="M0.600 4.300h12.800v6.200h-2.600V8.200H3.200v2.300H0.600z" fill="#2a2d35"/><rect x="3.900" y="9" width="6.200" height="3.900" fill="#fff" stroke="#2a2d35" stroke-width="1.500"/></svg>
<svg style="left:1646.50px;top:50%;margin-top:-7.400px" width="10.500" height="14.400" viewBox="0 0 10 14"><path d="M0.300 2.800h9.400M3.300 2.600V0.900h3.400v1.700" fill="none" stroke="#2a2d35" stroke-width="1.500"/><path d="M1 4h8v9.500H1z" fill="#2a2d35"/><path d="M3.700 6v5.500M6.300 6v5.500" stroke="#fff" stroke-width=".9"/></svg>
<div class="c lnk" style="left:1659.47px">复制</div>
</div>
<div class="row odd" style="top:545.10px">
<svg style="left:51.70px;top:50%;margin-top:-6.900px" width="15.6" height="15.6" viewBox="0 0 15.6 15.6"><rect x="0.9" y="0.9" width="13.8" height="13.8" rx="3" fill="#fff" stroke="#3c4048" stroke-width="1.700"/></svg>
<div class="c n" style="left:87.99px">2024-08-26<br>23:17</div>
<div class="c n" style="left:187.13px">2024-08-27<br>00:00</div>
<div class="c n" style="left:287.90px">2024-08-26 2<br>3:17</div>
<div class="c" style="left:397.79px">素类仓</div>
<div class="c lnk" style="left:507.27px;letter-spacing:-0.48px">CGRK240826<br>00003</div>
<div class="c" style="left:608.03px">供应商直供</div>
<div class="c" style="left:707.38px;letter-spacing:-0.2px">生鲜食材供应商(sxs<br>cgys3710)</div>
<div class="c n" style="left:848.69px;color:#7c7f87">-</div>
<div class="c n" style="left:987.78px;color:#7c7f87">-</div>
<div class="c n" style="left:1098.07px;letter-spacing:0.22px">0.00元</div>
<div class="c n" style="left:1247.90px;letter-spacing:0.22px">0.00元</div>
<div class="c n" style="left:1398.54px;letter-spacing:0.22px">0.00元</div>
<div class="c n" style="left:1557.90px;letter-spacing:0.22px">0.00元</div>
<svg style="left:1626.02px;top:50%;margin-top:-7.2px" width="14" height="14.400" viewBox="0 0 14 14"><path d="M3.600 4V1.300h6.800V4" fill="none" stroke="#2a2d35" stroke-width="1.700"/><path d="M0.600 4.300h12.800v6.200h-2.600V8.200H3.200v2.300H0.600z" fill="#2a2d35"/><rect x="3.900" y="9" width="6.200" height="3.900" fill="#fff" stroke="#2a2d35" stroke-width="1.500"/></svg>
<div class="c lnk" style="left:1645.48px">复制</div>
</div>
<div class="row even" style="top:605.18px">
<svg style="left:51.70px;top:50%;margin-top:-6.900px" width="15.6" height="15.6" viewBox="0 0 15.6 15.6"><rect x="0.9" y="0.9" width="13.8" height="13.8" rx="3" fill="#fff" stroke="#3c4048" stroke-width="1.700"/></svg>
<div class="c n" style="left:87.99px">2024-08-26<br>23:17</div>
<div class="c n" style="left:187.13px">2024-08-27<br>00:00</div>
<div class="c n" style="left:287.90px">2024-08-26 2<br>3:18</div>
<div class="c" style="left:397.79px">项目点仓库</div>
<div class="c lnk" style="left:507.27px;letter-spacing:-0.48px">CGRK240826<br>00002</div>
<div class="c" style="left:608.03px">供应商直供</div>
<div class="c" style="left:707.38px;letter-spacing:-0.2px">生鲜食材供应商(sxs<br>cgys3710)</div>
<div class="c n" style="left:848.69px;color:#7c7f87">-</div>
<div class="c n" style="left:987.78px;color:#7c7f87">-</div>
<div class="c n" style="left:1098.07px;letter-spacing:0.22px">0.00元</div>
<div class="c n" style="left:1247.90px;letter-spacing:0.22px">0.00元</div>
<div class="c n" style="left:1398.54px;letter-spacing:0.22px">0.00元</div>
<div class="c n" style="left:1557.90px;letter-spacing:0.22px">0.00元</div>
<svg style="left:1626.02px;top:50%;margin-top:-7.2px" width="14" height="14.400" viewBox="0 0 14 14"><path d="M3.600 4V1.300h6.800V4" fill="none" stroke="#2a2d35" stroke-width="1.700"/><path d="M0.600 4.300h12.800v6.200h-2.600V8.200H3.200v2.300H0.600z" fill="#2a2d35"/><rect x="3.900" y="9" width="6.200" height="3.900" fill="#fff" stroke="#2a2d35" stroke-width="1.500"/></svg>
<div class="c lnk" style="left:1645.48px">复制</div>
</div>
<div class="row odd" style="top:665.25px">
<svg style="left:51.70px;top:50%;margin-top:-6.900px" width="15.6" height="15.6" viewBox="0 0 15.6 15.6"><rect x="0.9" y="0.9" width="13.8" height="13.8" rx="3" fill="#fff" stroke="#3c4048" stroke-width="1.700"/></svg>
<div class="c n" style="left:87.99px">2024-08-26<br>22:49</div>
<div class="c n" style="left:187.13px">-</div>
<div class="c n" style="left:287.90px">2024-08-26 2<br>2:49</div>
<div class="c" style="left:397.79px">默认仓库</div>
<div class="c lnk" style="left:507.27px;letter-spacing:-0.48px">CGRK240826<br>00001</div>
<div class="c" style="left:608.03px">供应商直供</div>
<div class="c" style="left:707.38px;letter-spacing:-0.2px">生鲜食材供应商(sxs<br>cgys3710)</div>
<div class="c n" style="left:848.69px;color:#7c7f87">-</div>
<div class="c n" style="left:987.78px;color:#7c7f87">-</div>
<div class="c n" style="left:1098.07px;letter-spacing:0.22px">0.00元</div>
<div class="c n" style="left:1247.90px;letter-spacing:0.22px">0.00元</div>
<div class="c n" style="left:1398.54px;letter-spacing:0.22px">0.00元</div>
<div class="c n" style="left:1557.90px;letter-spacing:0.22px">0.00元</div>
<svg style="left:1626.02px;top:50%;margin-top:-7.2px" width="14" height="14.400" viewBox="0 0 14 14"><path d="M3.600 4V1.300h6.800V4" fill="none" stroke="#2a2d35" stroke-width="1.700"/><path d="M0.600 4.300h12.800v6.200h-2.600V8.200H3.200v2.300H0.600z" fill="#2a2d35"/><rect x="3.900" y="9" width="6.200" height="3.900" fill="#fff" stroke="#2a2d35" stroke-width="1.500"/></svg>
<div class="c lnk" style="left:1645.48px">复制</div>
</div>
<div class="row even" style="top:725.32px">
<svg style="left:51.70px;top:50%;margin-top:-6.900px" width="15.6" height="15.6" viewBox="0 0 15.6 15.6"><rect x="0.9" y="0.9" width="13.8" height="13.8" rx="3" fill="#fff" stroke="#3c4048" stroke-width="1.700"/></svg>
<div class="c n" style="left:87.99px">2024-08-25<br>18:26</div>
<div class="c n" style="left:187.13px">-</div>
<div class="c n" style="left:287.90px">2024-08-25 1<br>8:26</div>
<div class="c" style="left:397.79px">默认仓库</div>
<div class="c lnk" style="left:507.27px;letter-spacing:-0.48px">CGRK240825<br>00003</div>
<div class="c" style="left:608.03px">供应商直供</div>
<div class="c" style="left:707.38px;letter-spacing:-0.2px">生鲜食材供应商(sxs<br>cgys3710)</div>
<div class="c n" style="left:848.69px;color:#7c7f87">-</div>
<div class="c n" style="left:987.78px;color:#7c7f87">-</div>
<div class="c n" style="left:1098.07px;letter-spacing:0.22px">0.00元</div>
<div class="c n" style="left:1247.90px;letter-spacing:0.22px">0.00元</div>
<div class="c n" style="left:1398.54px;letter-spacing:0.22px">0.00元</div>
<div class="c n" style="left:1557.90px;letter-spacing:0.22px">0.00元</div>
<svg style="left:1626.02px;top:50%;margin-top:-7.2px" width="14" height="14.400" viewBox="0 0 14 14"><path d="M3.600 4V1.300h6.800V4" fill="none" stroke="#2a2d35" stroke-width="1.700"/><path d="M0.600 4.300h12.800v6.200h-2.600V8.200H3.200v2.300H0.600z" fill="#2a2d35"/><rect x="3.900" y="9" width="6.200" height="3.900" fill="#fff" stroke="#2a2d35" stroke-width="1.500"/></svg>
<div class="c lnk" style="left:1645.48px">复制</div>
</div>
<div class="row odd" style="top:785.40px">
<svg style="left:51.70px;top:50%;margin-top:-6.900px" width="15.6" height="15.6" viewBox="0 0 15.6 15.6"><rect x="0.9" y="0.9" width="13.8" height="13.8" rx="3" fill="#fff" stroke="#3c4048" stroke-width="1.700"/></svg>
<div class="c n" style="left:87.99px">2024-08-25<br>14:11</div>
<div class="c n" style="left:187.13px">-</div>
<div class="c n" style="left:287.90px">2024-08-26 1<br>6:54</div>
<div class="c" style="left:397.79px">默认仓库</div>
<div class="c lnk" style="left:507.27px;letter-spacing:-0.48px">CGRK240825<br>00002</div>
<div class="c" style="left:608.03px">供应商直供</div>
<div class="c" style="left:707.38px;letter-spacing:-0.2px">肉类供应商(rlgys21<br>26)</div>
<div class="c n" style="left:848.69px;color:#7c7f87">-</div>
<div class="c n" style="left:987.78px;color:#7c7f87">-</div>
<div class="c n" style="left:1098.07px;letter-spacing:0.22px">0.00元</div>
<div class="c n" style="left:1247.90px;letter-spacing:0.22px">0.00元</div>
<div class="c n" style="left:1398.54px;letter-spacing:0.22px">0.00元</div>
<div class="c n" style="left:1557.90px;letter-spacing:0.22px">0.00元</div>
<svg style="left:1626.02px;top:50%;margin-top:-7.2px" width="14" height="14.400" viewBox="0 0 14 14"><path d="M3.600 4V1.300h6.800V4" fill="none" stroke="#2a2d35" stroke-width="1.700"/><path d="M0.600 4.300h12.800v6.200h-2.600V8.200H3.200v2.300H0.600z" fill="#2a2d35"/><rect x="3.900" y="9" width="6.200" height="3.900" fill="#fff" stroke="#2a2d35" stroke-width="1.500"/></svg>
<div class="c lnk" style="left:1645.48px">复制</div>
</div>
<div class="row even" style="top:845.47px">
<svg style="left:51.70px;top:50%;margin-top:-6.900px" width="15.6" height="15.6" viewBox="0 0 15.6 15.6"><rect x="0.9" y="0.9" width="13.8" height="13.8" rx="3" fill="#fff" stroke="#3c4048" stroke-width="1.700"/></svg>
<div class="c n" style="left:87.99px">2024-08-25<br>09:51</div>
<div class="c n" style="left:187.13px">2024-08-21<br>00:00</div>
<div class="c n" style="left:287.90px">-</div>
<div class="c" style="left:397.79px">默认仓库</div>
<div class="c lnk" style="left:507.27px;letter-spacing:-0.48px">CGRK240825<br>00001</div>
<div class="c" style="left:608.03px">供应商直供</div>
<div class="c" style="left:707.38px;letter-spacing:-0.2px">肉类供应商(rlgys21<br>26)</div>
<div class="c n" style="left:848.69px;color:#7c7f87">-</div>
<div class="c n" style="left:987.78px;color:#7c7f87">-</div>
<div class="c n" style="left:1098.07px;letter-spacing:0.22px">151.58元</div>
<div class="c n" style="left:1247.90px;letter-spacing:0.22px">151.58元</div>
<div class="c n" style="left:1398.54px;letter-spacing:0.22px">151.58元</div>
<div class="c n" style="left:1557.90px;letter-spacing:0.22px">0.00元</div>
<svg style="left:1626.02px;top:50%;margin-top:-7.2px" width="14" height="14.400" viewBox="0 0 14 14"><path d="M3.600 4V1.300h6.800V4" fill="none" stroke="#2a2d35" stroke-width="1.700"/><path d="M0.600 4.300h12.800v6.200h-2.600V8.200H3.200v2.300H0.600z" fill="#2a2d35"/><rect x="3.900" y="9" width="6.200" height="3.900" fill="#fff" stroke="#2a2d35" stroke-width="1.500"/></svg>
<svg style="left:1646.50px;top:50%;margin-top:-7.400px" width="10.500" height="14.400" viewBox="0 0 10 14"><path d="M0.300 2.800h9.400M3.300 2.600V0.900h3.400v1.700" fill="none" stroke="#2a2d35" stroke-width="1.500"/><path d="M1 4h8v9.500H1z" fill="#2a2d35"/><path d="M3.700 6v5.500M6.300 6v5.500" stroke="#fff" stroke-width=".9"/></svg>
<div class="c lnk" style="left:1659.47px">复制</div>
</div>
<div class="row odd" style="top:905.54px">
<svg style="left:51.70px;top:50%;margin-top:-6.900px" width="15.6" height="15.6" viewBox="0 0 15.6 15.6"><rect x="0.9" y="0.9" width="13.8" height="13.8" rx="3" fill="#fff" stroke="#3c4048" stroke-width="1.700"/></svg>
<div class="c n" style="left:87.99px">2024-08-21<br>14:54</div>
<div class="c n" style="left:187.13px">-</div>
<div class="c n" style="left:287.90px">2024-08-21 1<br>4:54</div>
<div class="c" style="left:397.79px">项目点仓库</div>
<div class="c lnk" style="left:507.27px;letter-spacing:-0.48px">CGRK240821<br>00002</div>
<div class="c" style="left:608.03px">供应商直供</div>
<div class="c" style="left:707.38px;letter-spacing:-0.2px">肉类供应商(rlgys21<br>26)</div>
<div class="c n" style="left:848.69px;color:#7c7f87">-</div>
<div class="c n" style="left:987.78px;color:#7c7f87">-</div>
<div class="c n" style="left:1098.07px;letter-spacing:0.22px">0.00元</div>
<div class="c n" style="left:1247.90px;letter-spacing:0.22px">0.00元</div>
<div class="c n" style="left:1398.54px;letter-spacing:0.22px">0.00元</div>
<div class="c n" style="left:1557.90px;letter-spacing:0.22px">0.00元</div>
<svg style="left:1626.02px;top:50%;margin-top:-7.2px" width="14" height="14.400" viewBox="0 0 14 14"><path d="M3.600 4V1.300h6.800V4" fill="none" stroke="#2a2d35" stroke-width="1.700"/><path d="M0.600 4.300h12.800v6.200h-2.600V8.200H3.200v2.300H0.600z" fill="#2a2d35"/><rect x="3.900" y="9" width="6.200" height="3.900" fill="#fff" stroke="#2a2d35" stroke-width="1.500"/></svg>
<div class="c lnk" style="left:1645.48px">复制</div>
</div>
<div class="row even" style="top:965.62px">
<svg style="left:51.70px;top:50%;margin-top:-6.900px" width="15.6" height="15.6" viewBox="0 0 15.6 15.6"><rect x="0.9" y="0.9" width="13.8" height="13.8" rx="3" fill="#fff" stroke="#3c4048" stroke-width="1.700"/></svg>
<div class="c n" style="left:87.99px">2024-08-21<br>10:12</div>
<div class="c n" style="left:187.13px">2024-08-21<br>00:00</div>
<div class="c n" style="left:287.90px">2024-08-21 1<br>0:30</div>
<div class="c" style="left:397.79px">默认仓库</div>
<div class="c lnk" style="left:507.27px;letter-spacing:-0.48px">CGRK240821<br>00001</div>
<div class="c" style="left:608.03px">供应商直供</div>
<div class="c" style="left:707.38px;letter-spacing:-0.2px">生鲜食材供应商(sxs<br>cgys3710)</div>
<div class="c n" style="left:848.69px;color:#7c7f87">-</div>
<div class="c n" style="left:987.78px;color:#7c7f87">-</div>
<div class="c n" style="left:1098.07px;letter-spacing:0.22px">960.00元</div>
<div class="c n" style="left:1247.90px;letter-spacing:0.22px">960.00元</div>
<div class="c n" style="left:1398.54px;letter-spacing:0.22px">960.00元</div>
<div class="c n" style="left:1557.90px;letter-spacing:0.22px">0.00元</div>
<svg style="left:1626.02px;top:50%;margin-top:-7.2px" width="14" height="14.400" viewBox="0 0 14 14"><path d="M3.600 4V1.300h6.800V4" fill="none" stroke="#2a2d35" stroke-width="1.700"/><path d="M0.600 4.300h12.800v6.200h-2.600V8.200H3.200v2.300H0.600z" fill="#2a2d35"/><rect x="3.900" y="9" width="6.200" height="3.900" fill="#fff" stroke="#2a2d35" stroke-width="1.500"/></svg>
<div class="c lnk" style="left:1645.48px">复制</div>
</div>
<div class="abs" style="left:230.52px;top:424.95px;width:1px;height:569.31px;background:#eff0f4"></div>
<div class="abs" style="left:1769.16px;top:424.95px;width:1px;height:569.31px;background:#eff0f4"></div>
<div class="abs" style="left:167.87px;top:991.43px;width:1115.71px;height:3.24px;background:#c4c5c8"></div>
<div class="abs" style="left:1903.98px;top:173.55px;width:16.22px;height:16.63px;background:#f1f1f1"></div>
<svg style="left:1907.84px;top:178.82px" width="8.52px" height="5.07px" viewBox="0 0 10 6"><path d="M1 5l4-4 4 4" fill="none" stroke="#505050" stroke-width="1.800"/></svg>
<div class="abs" style="left:1903.98px;top:190.18px;width:16.22px;height:804.09px;background:#c8c8c8"></div>
<div class="abs" style="left:1873.37px;top:718.73px;width:47.04px;height:45.21px;background:#dce8fc;border-radius:8px 0 0 8px"></div>
<svg style="left:1888.98px;top:724.61px" width="17.03px" height="15.81px" viewBox="0 0 17 16"><g fill="none" stroke="#2f6fe0" stroke-width="1.700" stroke-linejoin="round"><path d="M8.500 1L15.500 4.500 8.500 8 1.500 4.500z"/><path d="M1.500 8l7 3.500 7-3.500M1.500 11.500l7 3.500 7-3.500"/></g></svg>
<div class="t t12" style="left:1885.33px;top:752.79px;color:#2f6fe0">任务</div>
<div class="abs" style="left:1889.59px;top:861.67px;width:30.82px;height:102.39px;background:#1268f3;border-radius:5px 0 0 5px"></div>
<svg style="left:1897.50px;top:871.40px" width="15.81px" height="15.81px" viewBox="0 0 16 16"><circle cx="8" cy="8" r="6.800" fill="none" stroke="#fff" stroke-width="1.400"/><path d="M4.800 8h.1M8 8h.1M11.200 8h.1" stroke="#fff" stroke-width="1.500" stroke-linecap="round"/></svg>
<div class="t t12" style="left:1898.91px;top:902.22px;color:#fff;font-weight:bold;font-size:12.5px">联</div>
<div class="t t12" style="left:1898.91px;top:918.44px;color:#fff;font-weight:bold;font-size:12.5px">系</div>
<div class="t t12" style="left:1898.91px;top:934.66px;color:#fff;font-weight:bold;font-size:12.5px">客</div>
<div class="t t12" style="left:1898.91px;top:950.88px;color:#fff;font-weight:bold;font-size:12.5px">服</div>
<div class="abs" style="left:0;top:994.26px;width:1920px;height:300px;background:#fff"></div>
</div></body></html>
